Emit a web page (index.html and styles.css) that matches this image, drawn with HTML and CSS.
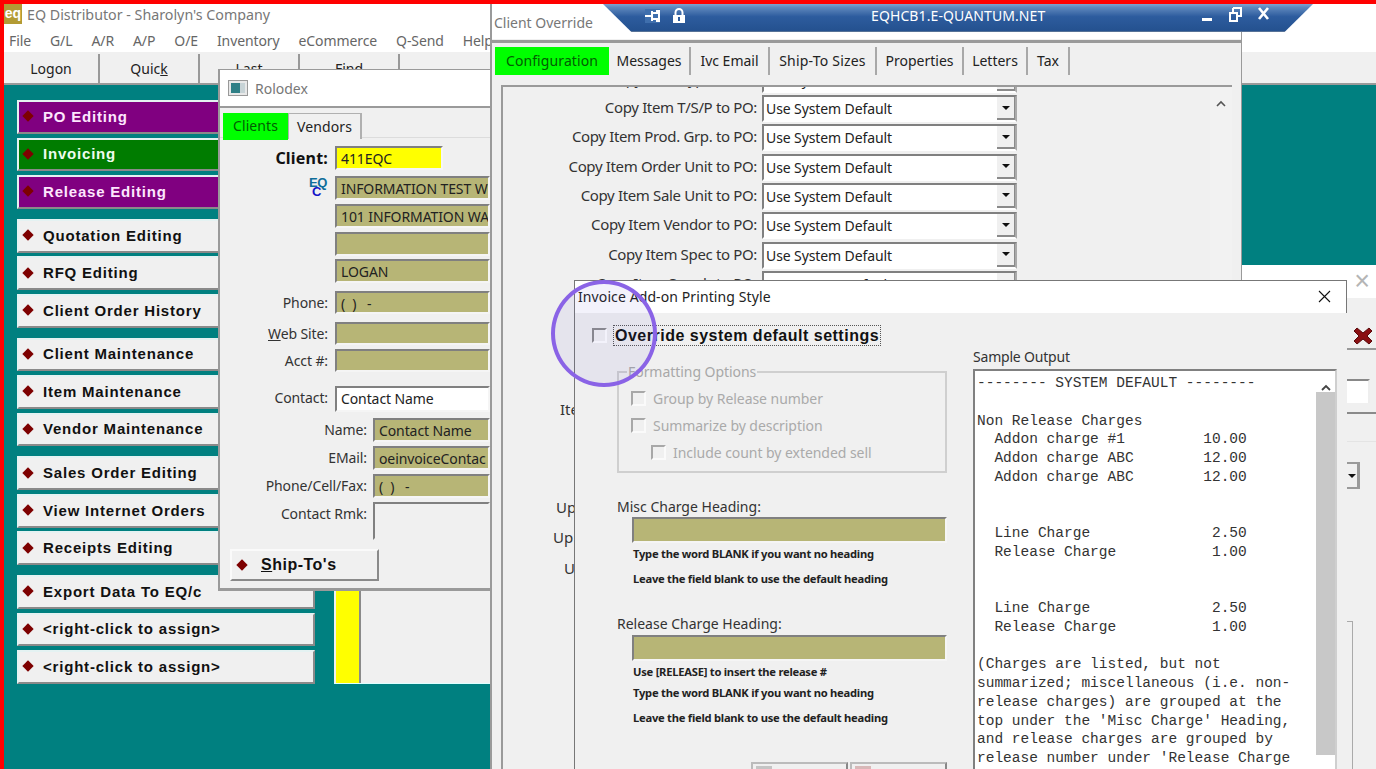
FILE: index.html
```html
<!DOCTYPE html>
<html lang="en">
<head>
<meta charset="utf-8">
<title>EQ Distributor</title>
<link rel="stylesheet" href="styles.css">
</head>
<body>
<div class="desktop">

  <section class="win main">
    <header class="main-title">
      <span class="app-icon">eq</span>
      <span class="main-title-text">EQ Distributor - Sharolyn's Company</span>
    </header>
    <nav class="menubar">
      <span>File</span><span>G/L</span><span>A/R</span><span>A/P</span><span>O/E</span><span>Inventory</span><span>eCommerce</span><span>Q-Send</span><span>Help</span>
    </nav>
    <div class="toolbar">
      <button class="tool">Logon</button>
      <button class="tool">Quic<u>k</u></button>
      <button class="tool">Last</button>
      <button class="tool">Find</button>
    </div>
    <div class="workspace">
      <div class="sidebar">
        <div class="btn-group">
          <div class="side-btn purple"><i class="dia"></i>PO Editing</div>
          <div class="side-btn green"><i class="dia"></i>Invoicing</div>
          <div class="side-btn purple"><i class="dia"></i>Release Editing</div>
        </div>
        <div class="btn-group">
          <div class="side-btn"><i class="dia"></i>Quotation Editing</div>
          <div class="side-btn"><i class="dia"></i>RFQ Editing</div>
          <div class="side-btn"><i class="dia"></i>Client Order History</div>
        </div>
        <div class="btn-group">
          <div class="side-btn"><i class="dia"></i>Client Maintenance</div>
          <div class="side-btn"><i class="dia"></i>Item Maintenance</div>
          <div class="side-btn"><i class="dia"></i>Vendor Maintenance</div>
        </div>
        <div class="btn-group">
          <div class="side-btn"><i class="dia"></i>Sales Order Editing</div>
          <div class="side-btn"><i class="dia"></i>View Internet Orders</div>
          <div class="side-btn"><i class="dia"></i>Receipts Editing</div>
        </div>
        <div class="btn-group">
          <div class="side-btn"><i class="dia"></i>Export Data To EQ/c</div>
          <div class="side-btn"><i class="dia"></i>&lt;right-click to assign&gt;</div>
          <div class="side-btn"><i class="dia"></i>&lt;right-click to assign&gt;</div>
        </div>
      </div>
      <div class="behind-panel"><div class="yellow-strip"></div></div>
    </div>
  </section>

  <section class="win back-win">
    <div class="back-title"><span class="back-close">×</span></div>
    <div class="back-body">
      <div class="back-btn">
        <svg width="20" height="18" viewBox="0 0 20 18"><path d="M1 4 4 1 10 6 16 1 19 4 14 9 19 14 16 17 10 12 4 17 1 14 6 9Z" fill="#8a0f12" stroke="#5a0a0c" stroke-width="1"/></svg>
      </div>
      <div class="back-input"></div>
      <div class="back-rule"></div>
      <div class="back-rule-faint"></div>
      <div class="back-select"><i class="arrow"></i></div>
      <div class="back-frame"></div>
    </div>
  </section>

  <section class="win rolodex">
    <header class="rolo-title">
      <svg class="rolo-icon" width="20" height="16" viewBox="0 0 20 16"><rect x=".5" y=".5" width="19" height="15" fill="#e8e8e8" stroke="#999"/><rect x="3" y="3" width="9" height="10" fill="#2f7f86"/><rect x="12" y="3" width="5" height="10" fill="#c7d3d6"/></svg>
      <span>Rolodex</span>
    </header>
    <div class="rolo-tabs">
      <span class="rtab active">Clients</span>
      <span class="rtab">Vendors</span>
    </div>
    <div class="rolo-form">
      <div class="rrow"><label class="rlabel strong">Client:</label><div class="field yellow">411EQC</div></div>
      <div class="rrow mt6">
        <div class="rlabel"><span class="eq-logo"><b>EQ</b><em>C</em></span></div>
        <div class="field olive">INFORMATION TEST W</div>
      </div>
      <div class="rrow mt3"><div class="rlabel"></div><div class="field olive">101 INFORMATION WA</div></div>
      <div class="rrow mt4"><div class="rlabel"></div><div class="field olive"></div></div>
      <div class="rrow mt3"><div class="rlabel"></div><div class="field olive">LOGAN</div></div>
      <div class="rrow mt8 short"><label class="rlabel">Phone:</label><div class="field olive">(&nbsp;&nbsp;)&nbsp;&nbsp;&nbsp;-</div></div>
      <div class="rrow mt8 short"><label class="rlabel"><u>W</u>eb Site:</label><div class="field olive"></div></div>
      <div class="rrow mt4 short"><label class="rlabel">Acct #:</label><div class="field olive"></div></div>
      <div class="rrow mt14 tall"><label class="rlabel">Contact:</label><div class="field white">Contact Name</div></div>
      <div class="rrow mt6"><label class="rlabel wide">Name:</label><div class="field olive">Contact Name</div></div>
      <div class="rrow mt3"><label class="rlabel wide">EMail:</label><div class="field olive">oeinvoiceContac</div></div>
      <div class="rrow mt4"><label class="rlabel wide">Phone/Cell/Fax:</label><div class="field olive">(&nbsp;&nbsp;)&nbsp;&nbsp;&nbsp;-</div></div>
      <div class="rrow mt4 rmk"><label class="rlabel wide">Contact Rmk:</label><div class="field blank"></div></div>
      <div class="ship-btn"><i class="dia"></i><span><u>S</u>hip-To's</span></div>
    </div>
  </section>

  <section class="win override">
    <header class="ov-title">Client Override</header>
    <div class="ov-body">
      <div class="ov-tabs">
        <span class="otab active">Configuration</span>
        <span class="otab">Messages</span>
        <span class="otab">Ivc Email</span>
        <span class="otab">Ship-To Sizes</span>
        <span class="otab">Properties</span>
        <span class="otab">Letters</span>
        <span class="otab">Tax</span>
      </div>
      <div class="ov-panel">
        <div class="ov-scroll"><svg width="10" height="7" viewBox="0 0 10 7"><path d="M1 6 5 2 9 6" fill="none" stroke="#555" stroke-width="1.6"/></svg></div>
        <div class="ov-rows">
          <div class="ov-row"><label>Copy Item Type to PO:</label><div class="select"><span>Use System Default</span><i class="sel-btn"><i class="arrow"></i></i></div></div>
          <div class="ov-row"><label>Copy Item T/S/P to PO:</label><div class="select"><span>Use System Default</span><i class="sel-btn"><i class="arrow"></i></i></div></div>
          <div class="ov-row"><label>Copy Item Prod. Grp. to PO:</label><div class="select"><span>Use System Default</span><i class="sel-btn"><i class="arrow"></i></i></div></div>
          <div class="ov-row"><label>Copy Item Order Unit to PO:</label><div class="select"><span>Use System Default</span><i class="sel-btn"><i class="arrow"></i></i></div></div>
          <div class="ov-row"><label>Copy Item Sale Unit to PO:</label><div class="select"><span>Use System Default</span><i class="sel-btn"><i class="arrow"></i></i></div></div>
          <div class="ov-row"><label>Copy Item Vendor to PO:</label><div class="select"><span>Use System Default</span><i class="sel-btn"><i class="arrow"></i></i></div></div>
          <div class="ov-row"><label>Copy Item Spec to PO:</label><div class="select"><span>Use System Default</span><i class="sel-btn"><i class="arrow"></i></i></div></div>
          <div class="ov-row"><label>Copy Item Supplr to PO:</label><div class="select"><span>Use System Default</span><i class="sel-btn"><i class="arrow"></i></i></div></div>
          <div class="stub stub-item">Ite</div>
          <div class="stub stub-up1">Up</div>
          <div class="stub stub-up2">Up</div>
          <div class="stub stub-u">U</div>
        </div>
      </div>
    </div>
  </section>

  <div class="rdp-bar">
    <div class="rdp-icons">
      <svg class="rdp-pin" width="15" height="14" viewBox="0 0 15 14"><path d="M0 7H7M7 2V12M7 4H12V2H14V12H12V10H7" fill="none" stroke="#fff" stroke-width="2"/></svg>
      <svg width="14" height="16" viewBox="0 0 14 16"><path d="M3.5 7V4.5a3.5 3.5 0 0 1 7 0V7" fill="none" stroke="#fff" stroke-width="2"/><rect x="1" y="7" width="12" height="8" fill="#fff"/><rect x="6" y="9" width="2" height="4" fill="#2a5a9c"/></svg>
    </div>
    <span class="rdp-name">EQHCB1.E-QUANTUM.NET</span>
    <div class="rdp-actions">
      <svg width="12" height="14" viewBox="0 0 12 14"><rect x="1" y="11" width="10" height="3" fill="#fff"/></svg>
      <svg width="14" height="15" viewBox="0 0 14 15"><path d="M5 1H13V9H10M5 1V5" fill="none" stroke="#fff" stroke-width="2"/><rect x="2" y="6" width="7" height="8" fill="none" stroke="#fff" stroke-width="2"/></svg>
      <svg width="13" height="13" viewBox="0 0 13 13"><path d="M2 1 11 12M11 1 2 12" stroke="#fff" stroke-width="2.6"/></svg>
    </div>
  </div>

  <section class="win invoice">
    <header class="inv-title">
      <span>Invoice Add-on Printing Style</span>
      <svg width="13" height="13" viewBox="0 0 13 13"><path d="M1 1 12 12M12 1 1 12" stroke="#111" stroke-width="1.1"/></svg>
    </header>
    <div class="inv-body">
      <div class="inv-left">
        <div class="override-row">
          <span class="check"></span>
          <span class="override-label">Override system default settings</span>
        </div>
        <fieldset class="format-group">
          <legend>Formatting Options</legend>
          <div class="opt"><span class="check dim"></span>Group by Release number</div>
          <div class="opt"><span class="check dim"></span>Summarize by description</div>
          <div class="opt nested"><span class="check dim"></span>Include count by extended sell</div>
        </fieldset>
        <div class="heading-label">Misc Charge Heading:</div>
        <div class="heading-input"></div>
        <p class="hint">Type the word BLANK if you want no heading</p>
        <p class="hint spaced">Leave the field blank to use the default heading</p>
        <div class="heading-label second">Release Charge Heading:</div>
        <div class="heading-input"></div>
        <p class="hint">Use [RELEASE] to insert the release #</p>
        <p class="hint tight">Type the word BLANK if you want no heading</p>
        <p class="hint spaced">Leave the field blank to use the default heading</p>
        <div class="inv-buttons">
          <div class="inv-btn ok"></div>
          <div class="inv-btn cancel"></div>
        </div>
      </div>
      <div class="inv-right">
        <div class="sample-label">Sample Output</div>
        <div class="sample-box">
<pre class="sample-text">-------- SYSTEM DEFAULT --------

Non Release Charges
  Addon charge #1         10.00
  Addon charge ABC        12.00
  Addon charge ABC        12.00


  Line Charge              2.50
  Release Charge           1.00


  Line Charge              2.50
  Release Charge           1.00

(Charges are listed, but not
summarized; miscellaneous (i.e. non-
release charges) are grouped at the
top under the 'Misc Charge' Heading,
and release charges are grouped by
release number under 'Release Charge</pre>
          <div class="sample-scroll">
            <div class="sample-up"><svg width="10" height="7" viewBox="0 0 10 7"><path d="M1 6 5 2 9 6" fill="none" stroke="#444" stroke-width="1.8"/></svg></div>
            <div class="sample-thumb"></div>
          </div>
        </div>
      </div>
    </div>
  </section>

  <div class="highlight-ring"></div>
</div>
</body>
</html>
```
FILE: styles.css
```css
* { box-sizing: border-box; }
html, body { margin: 0; padding: 0; }
body { background: #ff0000; font-family: "Noto Sans", "Open Sans", sans-serif; font-size: 14px; color: #222; }
.desktop { position: relative; width: 1376px; height: 769px; overflow: hidden; background: #ff0000; }
.win { position: absolute; overflow: hidden; }
i { display: block; font-style: normal; }
button { font: inherit; color: inherit; }

/* main window */
.main { left: 4px; top: 4px; width: 1372px; height: 765px; background: #fff; display: flex; flex-direction: column; }
.main-title { height: 28px; display: flex; align-items: flex-start; flex: none; }
.app-icon { width: 18px; height: 20px; background: #b39b34; color: #fff; font: bold 14px/18px "Liberation Sans", sans-serif; text-align: center; }
.main-title-text { margin-left: 5px; color: #777; font-size: 14.25px; line-height: 22px; }
.menubar { height: 20px; flex: none; display: flex; padding-left: 5px; gap: 19px; color: #666; font-size: 14px; line-height: 18px; letter-spacing: -.1px; }
.toolbar { height: 33px; flex: none; display: flex; background: #f0f0f0; padding-top: 2px; border-bottom: 2px solid #9a9a9a; }
.tool { width: 100px; height: 29px; border: 0; border-right: 2px solid #999; background: #f0f0f0; padding: 0; font-size: 14px; color: #222; }
.tool:first-child { width: 96px; }
.workspace { flex: 1; background: #008080; padding: 15px 0 0 13px; display: flex; align-items: flex-start; gap: 19px; }
.sidebar { width: 298px; display: flex; flex-direction: column; gap: 10px; }
.btn-group { display: flex; flex-direction: column; gap: 3.75px; }
.side-btn { height: 33.75px; background: #f0f0f0; border: 2px solid; border-color: #e4f2f2 #8a8a8a #8a8a8a #e4f2f2; display: flex; align-items: center; font: bold 15px "Liberation Sans", sans-serif; letter-spacing: .8px; color: #111; padding: 0 0 1px 5px; }
.side-btn.purple { background: #800080; color: #fde6fd; }
.side-btn.green { background: #007c00; color: #eefcee; }
.dia { width: 8px; height: 8px; background: #7d0000; transform: rotate(45deg); margin-right: 11px; flex: none; }
.behind-panel { width: 900px; height: 584px; background: #f0f0f0; border-bottom: 1px solid #dff; padding: 0 0 0 2px; }
.yellow-strip { width: 25px; height: 100%; background: #ffff00; border-right: 2px solid #8a8a8a; }

/* back window at the right */
.back-win { left: 1240px; top: 265px; width: 136px; height: 504px; background: #fff; display: flex; flex-direction: column; }
.back-title { height: 33px; flex: none; background: #fff; text-align: right; padding-right: 6px; }
.back-close { color: #b5b5b5; font: 300 27px/32px "Liberation Sans", sans-serif; }
.back-body { flex: 1; background: #f0f0f0; padding: 24px 0 0 107px; display: flex; flex-direction: column; }
.back-btn { height: 28px; border-bottom: 2px solid #999; padding: 5px 0 0 6px; }
.back-input { width: 23px; height: 24px; margin-top: 29px; background: #fff; border-top: 2px solid #888; border-right: 2px solid #eee; }
.back-rule { height: 2px; margin-top: 9px; background: #8a8a8a; }
.back-rule-faint { height: 1px; margin-top: 27px; background: #e4e4e4; }
.back-select { width: 13px; height: 27px; margin-top: 20px; background: #f0f0f0; border: solid #9a9a9a; border-width: 2px 3px 2px 0; display: flex; align-items: center; justify-content: center; }
.back-frame { width: 6px; flex: 1; margin-top: 132px; border: solid #aaa; border-width: 1px 1px 0 0; }
.arrow { width: 0; height: 0; border: 4px solid transparent; border-top: 4px solid #111; border-bottom: 0; }

/* rolodex */
.rolodex { left: 218px; top: 69px; width: 272px; height: 522px; background: #f0f0f0; border: 1px solid #a0a0a0; border-width: 1px 0 3px 2px; border-color: #9a9a9a; }
.rolo-title { height: 38px; background: #fff; border-bottom: 2px solid #9a9a9a; display: flex; align-items: center; padding-left: 8px; color: #777; font-size: 14px; gap: 7px; }
.rolo-tabs { display: flex; height: 30px; padding: 5px 0 0 3px; align-items: flex-start; position: relative; }
.rtab { height: 26px; line-height: 26px; background: #f0f0f0; border: solid #b0b0b0; border-width: 1px 2px 0 1px; padding: 0 8px; color: #222; letter-spacing: .1px; }
.rtab.active { background: #00ff00; width: 65px; height: 27px; border: 0; padding: 0 0 0 10px; color: #035c03; }
.rolo-form { padding: 8px 0 0 0; display: flex; flex-direction: column; border-top: 1px solid #dcdcdc; margin-top: -1px; }
.rrow { display: flex; height: 24px; }
.rrow.short { height: 23px; }
.rrow.tall { height: 26px; }
.rrow.rmk { height: 38px; }
.mt3 { margin-top: 3.5px; }
.mt4 { margin-top: 4px; }
.mt6 { margin-top: 6px; }
.mt8 { margin-top: 8px; }
.mt14 { margin-top: 14px; }
.rlabel { width: 108px; text-align: right; padding-right: 0; flex: none; margin-right: 7px; line-height: 24px; color: #333; font-size: 14px; letter-spacing: -.1px; position: relative; }
.rlabel.strong { font-weight: 700; color: #111; font-size: 16px; letter-spacing: .2px; }
.rlabel.wide { width: 147px; margin-right: 6px; }
.field { flex: 1; min-width: 0; overflow: hidden; white-space: nowrap; border: 2px solid; border-color: #808080 #f5f5f5 #f5f5f5 #808080; padding-left: 4px; line-height: 21px; font-size: 14px; color: #222; letter-spacing: -.1px; }
.field.yellow { flex: none; width: 108px; background: #ffff00; }
.field.olive { background: #b7b576; }
.field.white { background: #fff; }
.field.blank { background: #f0f0f0; border-color: #808080 #f0f0f0 #f0f0f0 #808080; }
.eq-logo { display: block; position: absolute; right: 0; top: 1px; width: 19px; height: 21px; font: bold 13px/12px "Liberation Sans", sans-serif; text-align: left; letter-spacing: -.5px; }
.eq-logo b { display: block; color: #0f6e9a; }
.eq-logo em { display: block; font-style: normal; color: #1414c8; margin: -3px 0 0 3px; }
.ship-btn { width: 149px; height: 32px; margin: 9px 0 0 10px; display: flex; align-items: center; padding-left: 6px; background: #f0f0f0; border: 2px solid; border-color: #fafafa #8a8a8a #8a8a8a #fafafa; font: bold 16px "Liberation Sans", sans-serif; letter-spacing: .5px; color: #111; }
.ship-btn .dia { margin-right: 15px; }

/* client override */
.override { left: 490px; top: 4px; width: 752px; height: 765px; background: #f0f0f0; border-left: 2px solid #9a9a9a; border-right: 1px solid #9a9a9a; display: flex; flex-direction: column; }
.ov-title { height: 35px; background: #fff; padding: 8px 0 0 2px; color: #777; font-size: 14px; line-height: 22px; flex: none; }
.ov-body { flex: 1; min-height: 0; border-top: 3px solid #9a9a9a; margin-top: 1px; padding: 4px 3px 0 3px; display: flex; flex-direction: column; }
.ov-tabs { display: flex; height: 28px; flex: none; }
.otab { line-height: 28px; border-right: 2px solid #a8a8a8; text-align: center; color: #222; font-size: 14px; letter-spacing: 0; flex: none; }
.otab:nth-child(1) { width: 114px; background: #00ff00; color: #035c03; border: 0; letter-spacing: .1px; }
.otab:nth-child(2) { width: 82px; }
.otab:nth-child(3) { width: 79px; }
.otab:nth-child(4) { width: 107px; letter-spacing: .2px; }
.otab:nth-child(5) { width: 87px; }
.otab:nth-child(6) { width: 64px; }
.otab:nth-child(7) { width: 42px; }
.ov-panel { flex: 1; min-height: 0; margin: 10px 6px 0 6px; border: solid #9a9a9a; border-width: 2px 0 0 2px; position: relative; overflow: hidden; }
.ov-scroll { position: absolute; top: 0; right: 0; width: 22px; height: 100%; background: #f2f2f2; text-align: center; padding-top: 5px; }
.ov-rows { margin-top: -21.33px; display: flex; flex-direction: column; gap: 2.33px; }
.ov-row { display: flex; height: 27px; gap: 5px; }
.ov-row label { width: 254px; text-align: right; line-height: 24px; font-size: 15px; letter-spacing: -.35px; color: #333; }
.select { width: 255px; background: #fff; border: 2px solid; border-color: #808080 #aaa #fff #808080; display: flex; justify-content: space-between; padding-left: 2px; line-height: 24px; letter-spacing: -.1px; color: #222; }
.sel-btn { width: 18px; background: #f0f0f0; border-bottom: 2px solid #8a8a8a; border-right: 1px solid #8a8a8a; display: flex; align-items: center; justify-content: center; }
.stub { color: #333; line-height: 18px; height: 18px; font-size: 15px; }
.stub-item { margin: 100px 0 0 57px; }
.stub-up1 { margin: 77px 0 0 53px; }
.stub-up2 { margin: 10px 0 0 50px; }
.stub-u { margin: 11px 0 0 61px; }

/* remote desktop bar */
.rdp-bar { position: absolute; left: 603px; top: 4px; width: 710px; height: 28px; clip-path: polygon(0 0, 100% 0, 96% 100%, 4% 100%); background: linear-gradient(#7ea2cf 0, #5f88bd 12%, #2d5c9e 45%, #24518f 96%, #7f8c9e 100%); display: flex; align-items: flex-start; padding-left: 42px; color: #fff; }
.rdp-icons { display: flex; gap: 12px; padding-top: 1px; align-items: center; height: 22px; width: 226px; flex: none; }
.rdp-pin { background: #3f6fad; }
.rdp-name { font: 14px/23px "Noto Sans", sans-serif; letter-spacing: .1px; width: 175px; flex: none; white-space: nowrap; }
.rdp-actions { display: flex; margin-left: 155px; gap: 15px; padding-top: 3px; align-items: flex-start; }

/* invoice dialog */
.invoice { left: 574px; top: 280px; width: 773px; height: 489px; background: #f0f0f0; border-left: 1px solid #777; border-top: 1px solid #777; display: flex; flex-direction: column; }
.inv-title { height: 32px; flex: none; background: #fff; border-right: 1px solid #777; display: flex; justify-content: space-between; align-items: center; padding: 0 15px 2px 3px; font-size: 14px; color: #222; letter-spacing: .1px; }
.inv-body { flex: 1; min-height: 0; display: flex; }
.inv-left { width: 398px; flex: none; padding: 12px 0 0 0; }
.override-row { display: flex; align-items: center; height: 21px; padding-left: 17px; }
.check { width: 15px; height: 15px; background: #f3f3f3; border: 2px solid; border-color: #8c8c8c #fff #fff #8c8c8c; flex: none; display: block; }
.check.dim { border-color: #a8a8a8 #fafafa #fafafa #a8a8a8; background: #f0f0f0; margin-right: 7px; }
.override-label { margin-left: 7px; font: bold 16px/19px "Liberation Sans", sans-serif; letter-spacing: .5px; color: #111; outline: 1px dotted #555; white-space: nowrap; padding: 0 1px; }
.format-group { margin: 17px 0 0 42px; width: 330px; height: 110px; padding: 4px 0 0 12px; border: 2px solid #cfcfcf; border-radius: 0; position: relative; }
.format-group legend { padding: 0 1px; margin-left: -4px; color: #a8a8a8; font-size: 14px; line-height: 18px; letter-spacing: -.05px; }
.opt { display: flex; align-items: center; height: 27px; color: #aaa; font-size: 14px; letter-spacing: -.05px; white-space: nowrap; }
.opt.nested { padding-left: 20px; }
.heading-label { margin: 24px 0 1px 42px; font-size: 14px; line-height: 19px; letter-spacing: 0; color: #333; }
.heading-label.second { margin: 27px 0 2px 42px; }
.heading-input { width: 315px; height: 26px; margin-left: 57px; background: #b7b576; border: 2px solid; border-color: #808080 #f5f5f5 #f5f5f5 #808080; }
.hint { margin: 3px 0 0 58px; font: 700 11.2px/16px "Noto Sans", sans-serif; color: #222; letter-spacing: -.25px; white-space: nowrap; }
.hint.spaced { margin-top: 9px; }
.hint.tight { margin-top: 5px; }
.inv-buttons { display: flex; gap: 2px; margin: 36px 0 0 176px; }
.inv-btn { width: 97px; height: 30px; background: #f0f0f0; border: 2px solid; border-color: #bbb #888 #888 #bbb; padding: 2px 0 0 3px; }
.inv-btn::before { content: ""; display: block; width: 16px; height: 8px; background: #c4c4c4; }
.inv-btn.cancel::before { background: #d8b8b8; }
.inv-right { flex: 1; min-width: 0; padding-top: 34px; }
.sample-label { font-size: 14px; line-height: 20px; letter-spacing: -.2px; color: #333; }
.sample-box { width: 364px; height: 420px; margin-top: 2px; background: #fff; border: solid #808080; border-width: 2px 2px 0 2px; border-right-color: #cfcfcf; display: flex; justify-content: space-between; }
.sample-text { margin: 0; padding: 3px 0 0 2px; font: 14.5px/18.75px "Liberation Mono", monospace; color: #333; white-space: pre; }
.sample-scroll { width: 19px; flex: none; background: #fff; }
.sample-up { height: 21px; text-align: center; padding-top: 5px; }
.sample-thumb { height: 363px; background: #c8c8c8; }

/* annotation ring */
.highlight-ring { position: absolute; left: 551px; top: 280px; width: 106px; height: 107px; border: 4px solid #8a63e6; border-radius: 50%; background: rgba(90, 70, 200, .07); }
```
